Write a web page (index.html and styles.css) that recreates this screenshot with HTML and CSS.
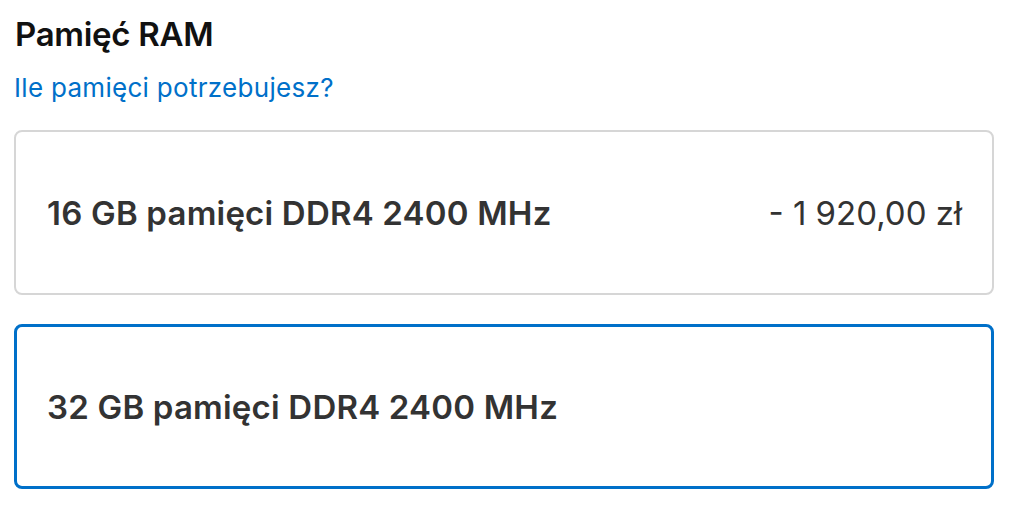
FILE: index.html
```html
<!DOCTYPE html>
<html>
	<head>
		<title>Pamięć RAM</title>
		<link rel="stylesheet" href="styles.css">
	</head>
	<body>
		<div id="memory">
			<h2 class="title">Pamięć RAM</h2>
			<a class="help" href="#">Ile pamięci potrzebujesz?</a>
			<div class="options">
				<label class="option">
					<span class="name">16 GB pamięci DDR4 2400 MHz</span>
					<span class="price">- 1 920,00 zł</span>
				</label>
				<label class="option selected">
					<span class="name">32 GB pamięci DDR4 2400 MHz</span>
				</label>
			</div>
		</div>
	</body>
</html>
```

FILE: styles.css
```css
body {
	margin:0;
	padding:14px 22px 0 14px;
	background:#fff;
	color:#333;
	font-family:Inter, "Noto Sans", Arial, Helvetica, sans-serif;
}
.title {
	margin:0 0 0 1px;
	font-size:33px;
	line-height:40px;
	font-weight:600;
	color:#111;
	letter-spacing:-0.3px;
}
.help {
	display:block;
	margin-top:18px;
	font-size:26px;
	line-height:32px;
	color:#0070c9;
	text-decoration:none;
	letter-spacing:0.3px;
}
.options {
	margin-top:26px;
	display:flex;
	flex-direction:column;
	gap:29px;
}
.option {
	display:flex;
	align-items:center;
	justify-content:space-between;
	height:165px;
	box-sizing:border-box;
	padding:0 30px 0 31px;
	border:2px solid #d6d6d6;
	border-radius:8px;
	font-size:33px;
}
.option.selected {
	border:3px solid #0070c9;
	padding-left:30px;
}
.name {
	font-weight:600;
	color:#333;
	letter-spacing:0.2px;
}
.price {
	color:#333;
}
```
